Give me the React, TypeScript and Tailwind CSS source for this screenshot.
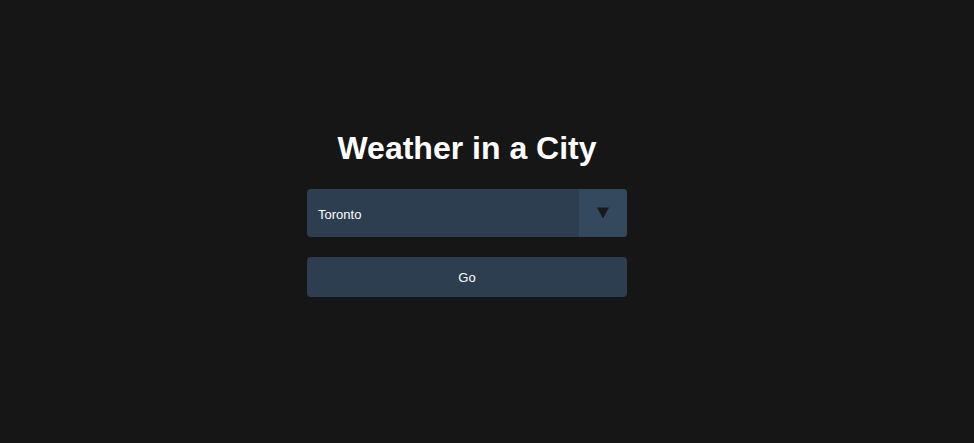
import React from "react";

export default function App() {
  return (
    <div className="min-h-screen w-full bg-[#161616] flex flex-col items-center pt-[130px] pr-[40px]" style={{ fontFamily: '"Liberation Sans", Arial, sans-serif' }}>
      <h1 className="text-[32px] leading-[36px] font-bold text-white m-0">Weather in a City</h1>
      <div className="mt-[23px] w-[320px] h-[48px] rounded-[4px] bg-[#2c3e50] flex overflow-hidden">
        <div className="flex-1 flex items-center pl-[11px] pt-[3px] text-[13px] text-white">Toronto</div>
        <div className="w-[48px] h-full bg-[#34495e] flex items-center justify-center">
          <svg width="12" height="12" viewBox="0 0 12 12">
            <polygon points="0,0.5 12,0.5 6,11.5" fill="#1a1a1a" />
          </svg>
        </div>
      </div>
      <button className="mt-[20px] w-[320px] h-[40px] rounded-[4px] bg-[#2c3e50] text-white text-[13px] pt-[2px] flex items-center justify-center">
        Go
      </button>
    </div>
  );
}
